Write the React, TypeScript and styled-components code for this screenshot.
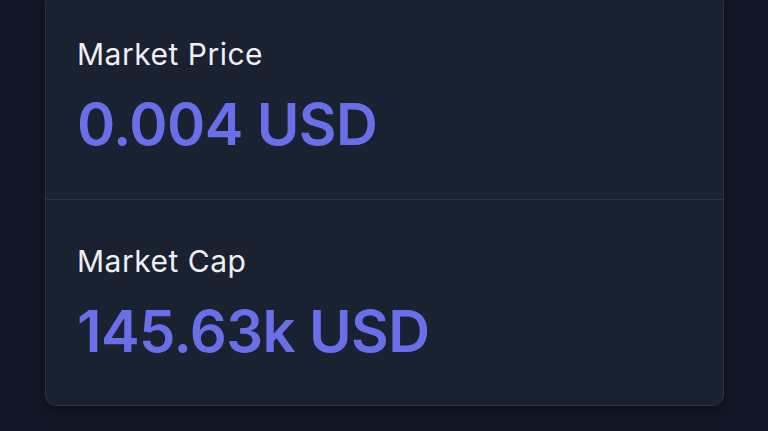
import React from "react";
import styled, { createGlobalStyle } from "styled-components";

const GlobalStyle = createGlobalStyle`
  html, body {
    margin: 0;
    padding: 0;
    background: #111726;
    overflow: hidden;
  }
  body {
    font-family: Inter, "Noto Sans", "Liberation Sans", sans-serif;
    -webkit-font-smoothing: antialiased;
  }
`;

const Page = styled.div`
  width: 768px;
  height: 431px;
  box-sizing: border-box;
  padding: 0 44px 0 45px;
  background: #111726;
  overflow: hidden;
`;

const Card = styled.div`
  margin-top: -8px;
  background: #1a2130;
  border: 1px solid #2a3243;
  border-radius: 11px;
  box-shadow: 0 6px 10px rgba(5, 8, 16, 0.35);
  display: flex;
  flex-direction: column;
`;

const Stat = styled.div<{ $divider?: boolean }>`
  display: flex;
  flex-direction: column;
  gap: 20px;
  padding: 43px 30px 43px 31px;
  border-top: ${(p) => (p.$divider ? "1px solid #2c3546" : "none")};
  &:last-child {
    padding-bottom: 42px;
  }
`;

const Label = styled.div`
  font-size: 30px;
  line-height: 36px;
  font-weight: 400;
  color: #eef0f4;
  letter-spacing: 0.5px;
`;

const Value = styled.div`
  font-size: 58px;
  line-height: 64px;
  font-weight: 600;
  color: #6a6ee9;
  letter-spacing: -0.6px;
`;

const stats = [
  { label: "Market Price", value: "0.004 USD" },
  { label: "Market Cap", value: "145.63k USD" },
];

export default function App() {
  return (
    <>
      <GlobalStyle />
      <Page>
        <Card>
          {stats.map((s, i) => (
            <Stat key={s.label} $divider={i > 0}>
              <Label>{s.label}</Label>
              <Value>{s.value}</Value>
            </Stat>
          ))}
        </Card>
      </Page>
    </>
  );
}
